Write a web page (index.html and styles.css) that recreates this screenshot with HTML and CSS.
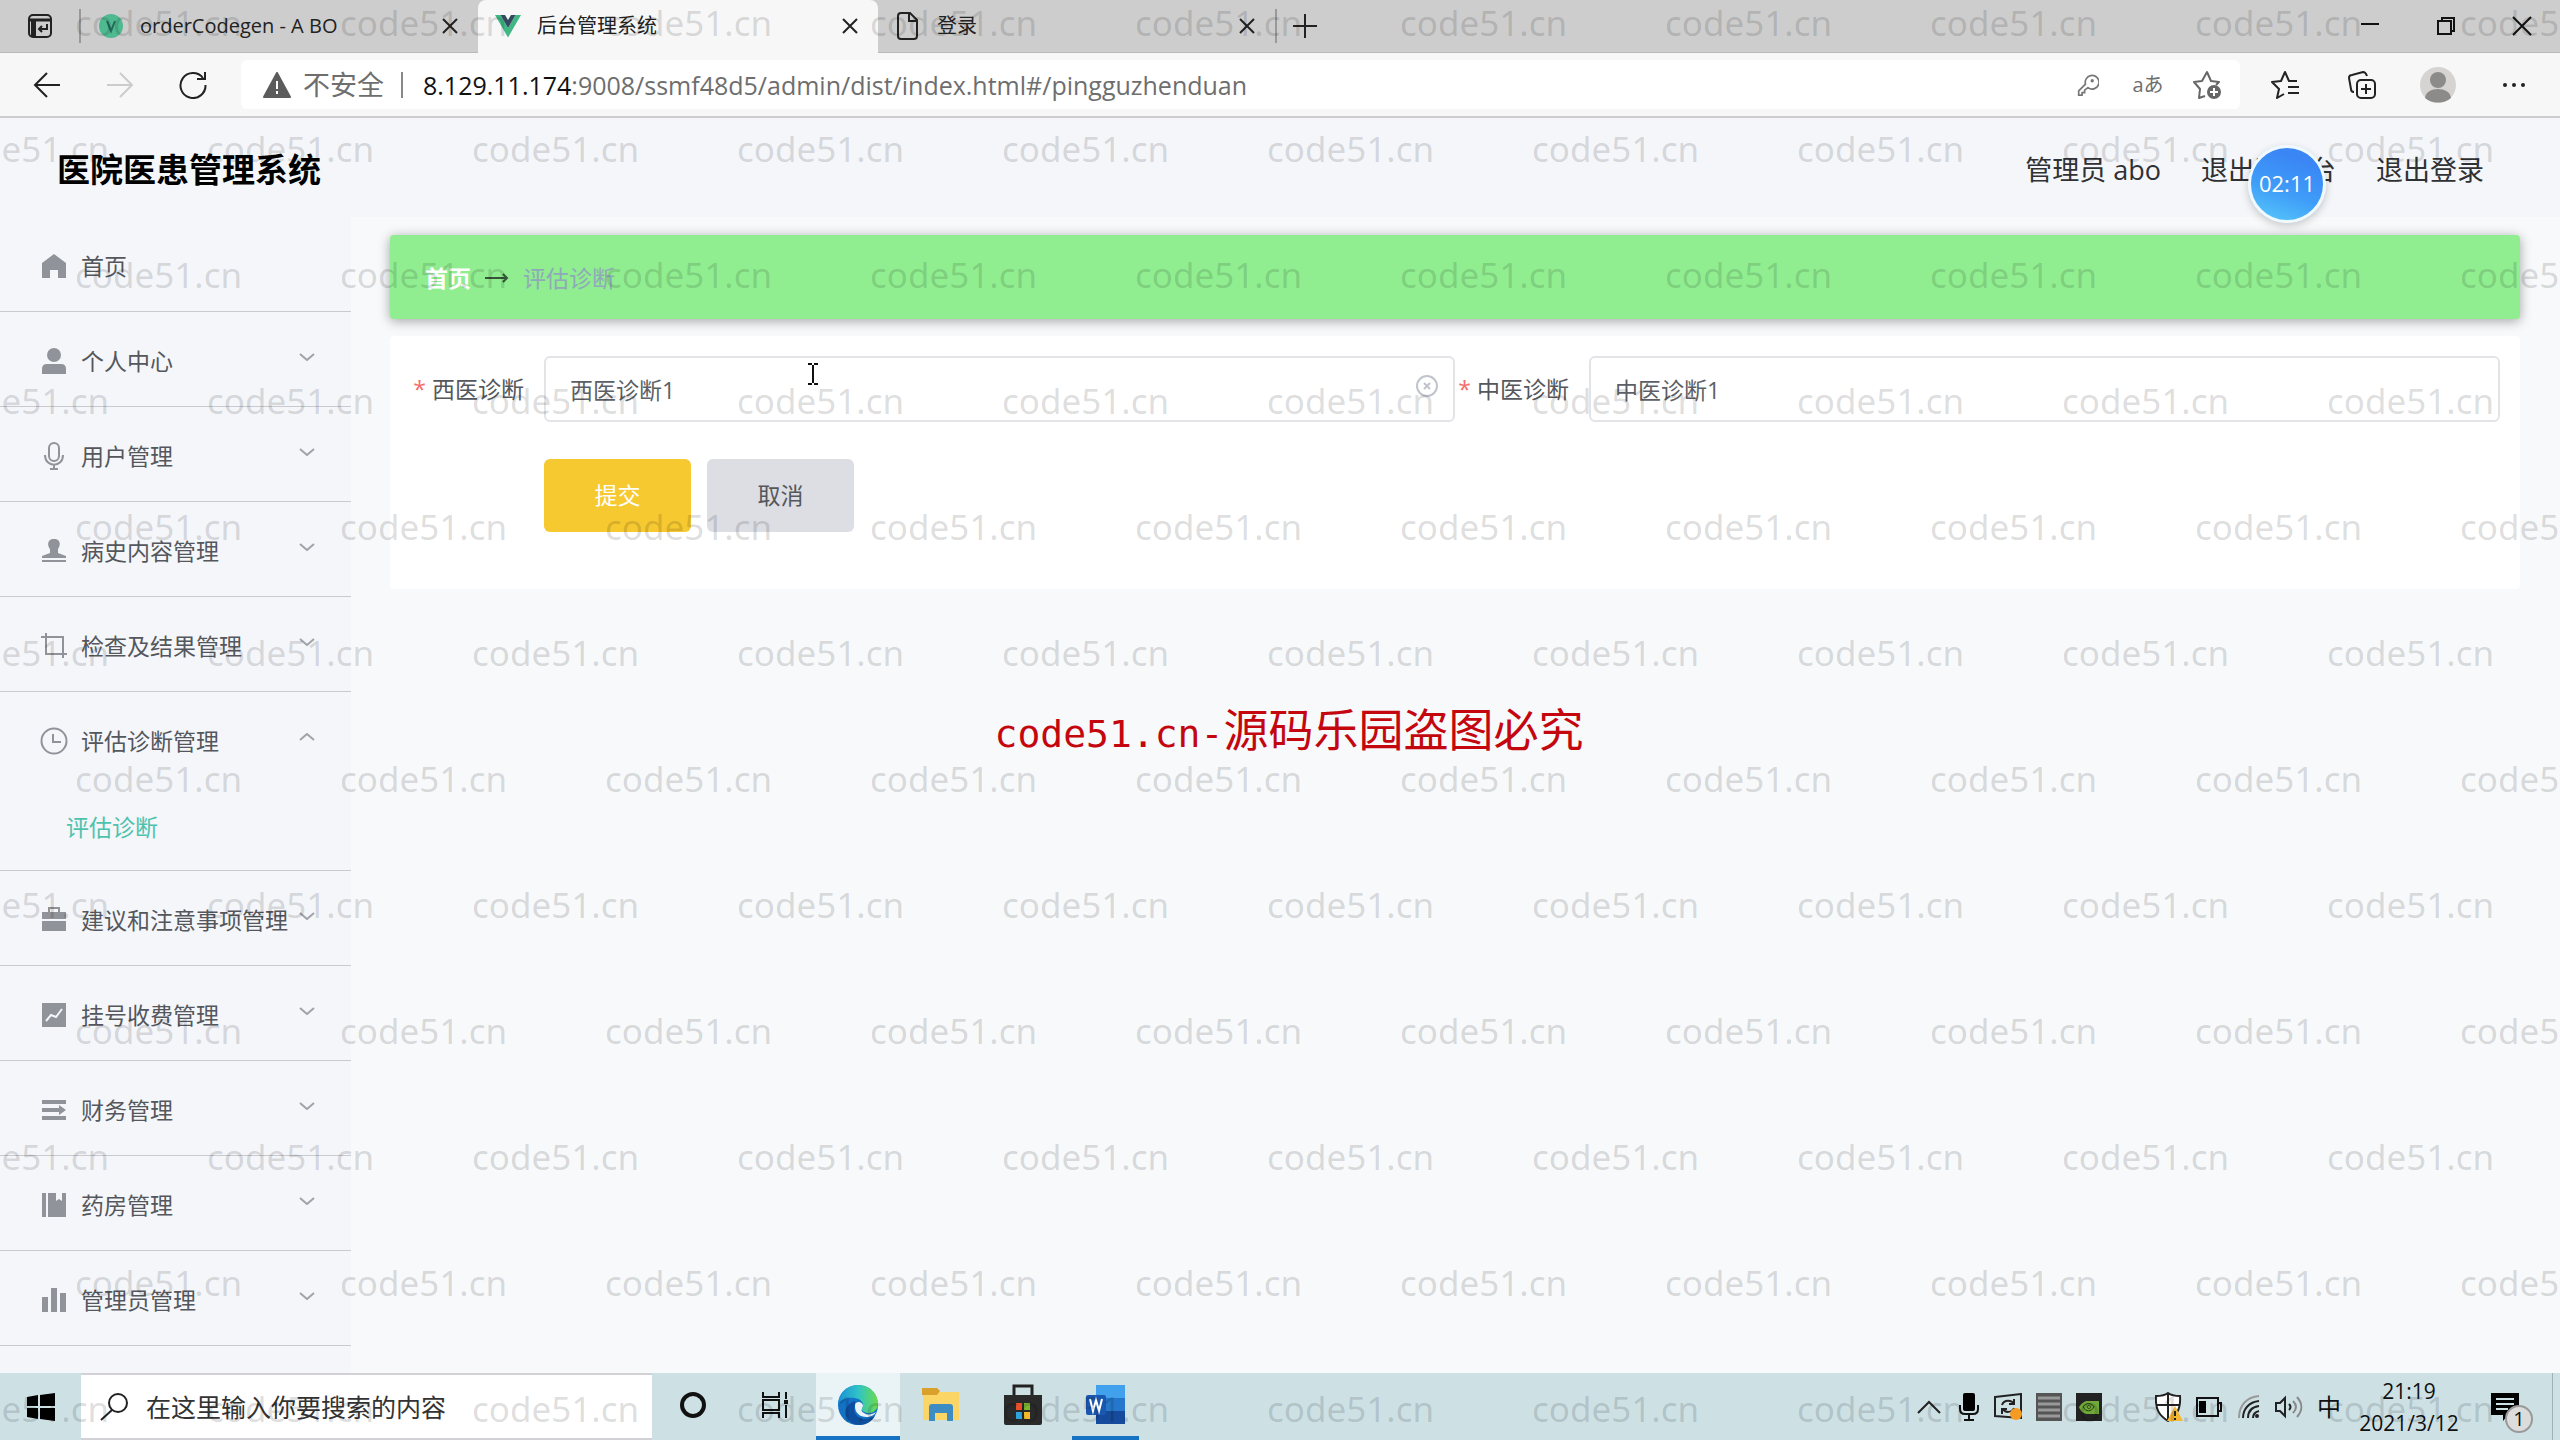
FILE: index.html
```html
<!DOCTYPE html>
<html lang="zh-CN">
<head>
<meta charset="utf-8">
<title>后台管理系统</title>
<link rel="stylesheet" href="styles.css">
</head>
<body>
<div class="tabstrip">
  <button class="tab-menu" aria-label="标签页操作"><svg width="26" height="26" viewBox="0 0 26 26" fill="none" stroke="#222" stroke-width="2"><rect x="2" y="2" width="22" height="22" rx="4"/><path d="M2 7h22" stroke-width="3"/><path d="M4 6v18h5V6z" fill="#222" stroke="none"/><path d="M20 11v5h-8m3-3-3 3 3 3"/></svg></button>
  <span class="divider"></span>
  <div class="tab tab-first">
    <svg width="26" height="26" viewBox="0 0 26 26"><circle cx="13" cy="13" r="12" fill="#4fb990"/><path d="M9 8l4 10 4-10" fill="none" stroke="#1f6a58" stroke-width="2"/></svg>
    <span class="tab-title">orderCodegen - A BO</span>
    <button class="tab-close" aria-label="关闭"><svg width="16" height="16" viewBox="0 0 16 16" stroke="#222" stroke-width="2"><path d="M1 1l14 14M15 1L1 15"/></svg></button>
  </div>
  <div class="tab tab-active">
    <svg width="26" height="24" viewBox="0 0 26 24"><path d="M0 1h5.500L13 14l7.500-13H26L13 23.500z" fill="#41b883"/><path d="M5.500 1h4.500l3 5 3-5h4.500L13 14z" fill="#34495e"/></svg>
    <span class="tab-title">后台管理系统</span>
    <button class="tab-close" aria-label="关闭"><svg width="16" height="16" viewBox="0 0 16 16" stroke="#222" stroke-width="2"><path d="M1 1l14 14M15 1L1 15"/></svg></button>
  </div>
  <div class="tab tab-last">
    <svg width="26" height="28" viewBox="0 0 26 28" fill="none" stroke="#222" stroke-width="2"><path d="M6 1h9l7 7v16a3 3 0 0 1-3 3H6a3 3 0 0 1-3-3V4a3 3 0 0 1 3-3z"/><path d="M14 1v8h8"/></svg>
    <span class="tab-title">登录</span>
    <button class="tab-close" aria-label="关闭"><svg width="16" height="16" viewBox="0 0 16 16" stroke="#222" stroke-width="2"><path d="M1 1l14 14M15 1L1 15"/></svg></button>
  </div>
  <span class="divider"></span>
  <button class="new-tab" aria-label="新建标签页"><svg width="24" height="24" viewBox="0 0 24 24" stroke="#222" stroke-width="2"><path d="M12 0v24M0 12h24"/></svg></button>
  <div class="window-controls">
    <button aria-label="最小化"><svg width="20" height="20" viewBox="0 0 20 20" stroke="#111" stroke-width="2"><path d="M1 8h18"/></svg></button>
    <button aria-label="还原"><svg width="20" height="20" viewBox="0 0 20 20" fill="none" stroke="#111" stroke-width="2"><path d="M2 5h13v13H2zM6 5V2h12v13h-3"/></svg></button>
    <button aria-label="关闭窗口"><svg width="20" height="20" viewBox="0 0 20 20" stroke="#111" stroke-width="2"><path d="M1 1l18 18M19 1L1 19"/></svg></button>
  </div>
</div>

<div class="toolbar">
  <div class="nav-buttons">
    <button aria-label="后退"><svg width="28" height="28" viewBox="0 0 28 28" fill="none" stroke="#222" stroke-width="2"><path d="M27 14H2M14 2L2 14l12 12"/></svg></button>
    <button aria-label="前进"><svg width="28" height="28" viewBox="0 0 28 28" fill="none" stroke="#ccc" stroke-width="2"><path d="M1 14h25M14 2l12 12-12 12"/></svg></button>
    <button aria-label="刷新"><svg width="28" height="28" viewBox="0 0 28 28" fill="none" stroke="#222" stroke-width="2"><path d="M24 7a12.500 12.500 0 1 0 2.500 7M26 1v7h-8"/></svg></button>
  </div>
  <div class="address">
    <svg width="28" height="26" viewBox="0 0 28 26"><path d="M14 1L27 25H1z" fill="#5c5c5c" stroke="#5c5c5c" stroke-width="2" stroke-linejoin="round"/><path d="M14 9v8M14 19v3" stroke="#fff" stroke-width="2"/></svg>
    <span class="insecure">不安全</span>
    <span class="address-divider"></span>
    <span class="url"><b>8.129.11.174</b>:9008/ssmf48d5/admin/dist/index.html#/pingguzhenduan</span>
    <div class="address-tools">
      <button aria-label="密码"><svg width="22" height="24" viewBox="0 0 26 26" fill="none" stroke="#777" stroke-width="2"><path d="M16 2a8 8 0 1 1-3 14l-4 3v3H6v3H2v-5l8-8a8 8 0 0 1 6-10z"/><circle cx="18" cy="8" r="1"/></svg></button>
      <button class="translate">aあ</button>
      <button aria-label="添加到收藏夹"><svg width="30" height="30" viewBox="0 0 30 30" fill="none" stroke="#666" stroke-width="2"><path d="M12 26l-6 2 1-9-6-7 8-1 5-9 4 9 8 1-3 3" stroke-linejoin="round"/><circle cx="21" cy="22" r="7" fill="#666" stroke="none"/><path d="M21 18v8M17 22h8" stroke="#fff"/></svg></button>
    </div>
  </div>
  <div class="browser-tools">
    <button aria-label="收藏夹"><svg width="30" height="30" viewBox="0 0 30 30" fill="none" stroke="#222" stroke-width="2"><path d="M13 24l-7 4 2-9-7-7 9-1 4-9 4 9h8M17 17h11M17 23h11" stroke-linejoin="round"/></svg></button>
    <button aria-label="集锦"><svg width="30" height="30" viewBox="0 0 30 30" fill="none" stroke="#222" stroke-width="2"><rect x="10" y="10" width="18" height="18" rx="4"/><path d="M19 14v10M14 19h10M7 22c-2 0-3-1-3-3L2 8c0-2 1-3 3-3l11-3c2 0 3 1 4 4"/></svg></button>
    <button aria-label="个人资料"><svg width="38" height="38" viewBox="0 0 38 38"><circle cx="19" cy="19" r="18" fill="#d6d4d2"/><circle cx="19" cy="14" r="8" fill="#8d8b89"/><path d="M6 32c1-12 25-12 26 0-7 6-19 6-26 0z" fill="#8d8b89"/></svg></button>
    <button aria-label="设置及其他"><svg width="24" height="6" viewBox="0 0 24 6" fill="#222"><circle cx="3" cy="3" r="2"/><circle cx="12" cy="3" r="2"/><circle cx="21" cy="3" r="2"/></svg></button>
  </div>
</div>

<div class="page">
  <header class="site-header">
    <h1>医院医患管理系统</h1>
    <div class="user-links">
      <span>管理员 abo</span>
      <a href="#front">退出到前台</a>
      <a href="#logout">退出登录</a>
    </div>
    <div class="timer">02:11</div>
  </header>
  <div class="body">
    <nav class="sidebar">
      <ul>
        <li><a href="#home"><svg class="ico" viewBox="0 0 24 24"><path d="M12 0l12 9v15h-8v-8H8v8H0V9z"/></svg>首页</a></li>
        <li><a href="#me"><svg class="ico" viewBox="0 0 24 24"><circle cx="12" cy="6" r="7"/><path d="M0 25v-5q0-5 5-5h14q5 0 5 5v5z"/></svg>个人中心<svg class="chev" viewBox="0 0 16 8"><path d="M1 1l7 6 7-6"/></svg></a></li>
        <li><a href="#users"><svg class="ico line" viewBox="0 0 24 24"><rect x="7" y="-1" width="10" height="18" rx="5"/><path d="M3 11c0 13 18 13 18 0M12 21v4M8 25h8"/></svg>用户管理<svg class="chev" viewBox="0 0 16 8"><path d="M1 1l7 6 7-6"/></svg></a></li>
        <li><a href="#history"><svg class="ico" viewBox="0 0 24 24"><path d="M12 0c8 0 6 8 4 10v4l8 3v2H0v-2l8-3v-4C6 8 4 0 12 0zM0 21h24v2H0z"/></svg>病史内容管理<svg class="chev" viewBox="0 0 16 8"><path d="M1 1l7 6 7-6"/></svg></a></li>
        <li><a href="#exam"><svg class="ico line" viewBox="0 0 24 24"><path d="M4-1v21h21M-1 3h22v21"/></svg>检查及结果管理<svg class="chev" viewBox="0 0 16 8"><path d="M1 1l7 6 7-6"/></svg></a></li>
        <li class="open"><a href="#assess"><svg class="ico line" viewBox="0 0 24 24"><circle cx="12" cy="12" r="12.500"/><path d="M11 5v8h8"/></svg>评估诊断管理<svg class="chev" viewBox="0 0 16 8"><path d="M1 7l7-6 7 6"/></svg></a>
          <a class="sub" href="#pingguzhenduan">评估诊断</a></li>
        <li><a href="#advice"><svg class="ico" viewBox="0 0 24 24"><path d="M0 4h6v-5h12v5h6v7H0zM8 4h8V1H8zM0 13h24v10H0z" fill-rule="evenodd"/></svg>建议和注意事项管理<svg class="chev" viewBox="0 0 16 8"><path d="M1 1l7 6 7-6"/></svg></a></li>
        <li><a href="#fees"><svg class="ico" viewBox="0 0 24 24"><path d="M0 0h24v24H0z"/><path d="M4 18l5-6 5 2 6-8" fill="none" stroke="#f4f6fa" stroke-width="2"/></svg>挂号收费管理<svg class="chev" viewBox="0 0 16 8"><path d="M1 1l7 6 7-6"/></svg></a></li>
        <li><a href="#finance"><svg class="ico" viewBox="0 0 24 24"><path d="M0 2h24v4H0zM0 10h17V7l7 5-7 5v-3H0zM0 18h24v4H0z"/></svg>财务管理<svg class="chev" viewBox="0 0 16 8"><path d="M1 1l7 6 7-6"/></svg></a></li>
        <li><a href="#pharmacy"><svg class="ico" viewBox="0 0 24 24"><path d="M0 0h4v24H0zM6 0h8v8l3-2 3 2V0h4v24H6z"/></svg>药房管理<svg class="chev" viewBox="0 0 16 8"><path d="M1 1l7 6 7-6"/></svg></a></li>
        <li><a href="#admins"><svg class="ico" viewBox="0 0 24 24"><path d="M0 9h6v15H0zM9 0h6v24H9zM18 5h6v19h-6z"/></svg>管理员管理<svg class="chev" viewBox="0 0 16 8"><path d="M1 1l7 6 7-6"/></svg></a></li>
      </ul>
    </nav>
    <main>
      <div class="breadcrumb">
        <a href="#home">首页</a>
        <svg width="24" height="12" viewBox="0 0 24 12" fill="none" stroke="#35563a" stroke-width="2"><path d="M0 6h22M18 2l4 4-4 4"/></svg>
        <span>评估诊断</span>
      </div>
      <form class="card">
        <div class="field">
          <label for="western"><i>*</i>西医诊断</label>
          <div class="control">
            <input id="western" type="text" value="西医诊断1">
            <button type="button" class="clear" aria-label="清空"><svg width="22" height="22" viewBox="0 0 22 22" fill="none" stroke="#c0c4cc" stroke-width="2"><circle cx="11" cy="11" r="10"/><path d="M8 8l6 6M14 8l-6 6"/></svg></button>
          </div>
        </div>
        <div class="field">
          <label for="chinese"><i>*</i>中医诊断</label>
          <div class="control"><input id="chinese" type="text" value="中医诊断1"></div>
        </div>
        <div class="actions">
          <button type="button" class="submit">提交</button>
          <button type="button" class="cancel">取消</button>
        </div>
      </form>
    </main>
  </div>
</div>

<div class="taskbar">
  <button class="start" aria-label="开始"><svg width="28" height="28" viewBox="0 0 28 28"><path d="M0 4l11-2v11H0zM13 2l15-2v13H13zM0 15h11v11L0 24zM13 15h15v13l-15-2z"/></svg></button>
  <label class="search">
    <svg width="28" height="28" viewBox="0 0 28 28" fill="none" stroke="#222" stroke-width="2"><circle cx="18" cy="10" r="9"/><path d="M12 17L1 27"/></svg>
    <input type="text" placeholder="在这里输入你要搜索的内容" aria-label="搜索">
  </label>
  <button class="app" aria-label="Cortana"><svg width="28" height="28" viewBox="0 0 28 28" fill="none" stroke="#111" stroke-width="4"><circle cx="14" cy="14" r="11"/></svg></button>
  <button class="app" aria-label="任务视图"><svg width="28" height="28" viewBox="0 0 28 28" fill="none" stroke="#111" stroke-width="2"><path d="M2 1v5h16V1M2 27v-5h16v5M2 9h16v10H2zM25 1v7M25 14v13"/><path d="M23 9h4v4h-4z" fill="#111" stroke="none"/></svg></button>
  <button class="app running current" aria-label="Edge"><svg width="42" height="42" viewBox="0 0 42 42"><defs><linearGradient id="eg" x1="0" x2="1"><stop offset="0" stop-color="#1b8fd8"/><stop offset=".5" stop-color="#2fc3c8"/><stop offset="1" stop-color="#6bdb4c"/></linearGradient></defs><circle cx="21" cy="21" r="20" fill="#1372c4"/><path d="M1 20C3-5 39-5 41 19c0 9-8 12-14 9-4-2-1-4-1-7 0-9-20-10-25-1z" fill="url(#eg)"/><path d="M18 21c-4 11 8 18 20 11-7 12-24 12-29 0-2-7 2-13 9-15z" fill="#0d4f9e"/><path d="M18 21c1-5 8-3 8 1-1 3-3 5 1 7 4 3 9 1 12-1-4 8-22 7-21-7z" fill="#eaf4f6"/></svg></button>
  <button class="app" aria-label="文件资源管理器"><svg width="40" height="36" viewBox="0 0 40 36"><path d="M2 5h36v28H2z" fill="#fbd667"/><path d="M1 1h15l3 3-3 4H1z" fill="#d9a02c"/><path d="M8 34V20q0-3 3-3h18q3 0 3 3v14h-6v-8H14v8z" fill="#3d8cc4"/></svg></button>
  <button class="app" aria-label="Microsoft Store"><svg width="40" height="42" viewBox="0 0 40 42"><path d="M11 12V2h18v10" fill="none" stroke="#222" stroke-width="3"/><path d="M1 11h38v28q0 2-2 2H3q-2 0-2-2z" fill="#2a2a2a"/><path d="M13 19h6v7h-6z" fill="#e8502a"/><path d="M21 19h6v7h-6z" fill="#7cb82f"/><path d="M13 28h6v7h-6z" fill="#2fa3df"/><path d="M21 28h6v7h-6z" fill="#f4b92a"/></svg></button>
  <button class="app running" aria-label="Word"><svg width="40" height="42" viewBox="0 0 40 42"><path d="M10 1h29v14H10z" fill="#42a1ec"/><path d="M10 14h29v14H10z" fill="#2477cc"/><path d="M10 27h29v13H10z" fill="#154a9c"/><rect x="0" y="11" width="20" height="20" rx="2" fill="#1a57ae"/><path d="M4 15l3 12 3-11 3 11 3-12" fill="none" stroke="#fff" stroke-width="2"/></svg></button>
  <div class="tray">
    <button aria-label="显示隐藏的图标"><svg width="24" height="14" viewBox="0 0 24 14" fill="none" stroke="#222" stroke-width="2"><path d="M1 13L12 2l11 11"/></svg></button>
    <button aria-label="麦克风"><svg width="20" height="28" viewBox="0 0 20 28"><rect x="4" y="0" width="12" height="18" rx="2"/><path d="M1 12v4q0 5 5 5h8q5 0 5-5v-4M10 21v6M5 27h10" fill="none" stroke="#111" stroke-width="2"/></svg></button>
    <button aria-label="同步"><svg width="30" height="28" viewBox="0 0 30 28" fill="none" stroke="#222" stroke-width="2"><path d="M1 4l26-3v24L1 23z"/><path d="M8 12c2-6 10-5 12-1M20 6v5h-5M20 15c-2 5-9 5-11 1M8 21v-5h5"/><circle cx="22" cy="21" r="6" fill="#f59a23" stroke="none"/></svg></button>
    <button aria-label="内存"><svg width="26" height="28" viewBox="0 0 26 28"><path d="M0 0h26v28H0z" fill="#555"/><path d="M2 5h22M2 11h22M2 17h22M2 23h22" stroke="#999" stroke-width="3"/></svg></button>
    <button aria-label="NVIDIA"><svg width="26" height="28" viewBox="0 0 26 28"><path d="M0 0h26v28H0z" fill="#222"/><path d="M3 14c4-6 8-6 8-6h12v13H11c-4 0-7-4-8-7z" fill="#71a83a"/><path d="M7 14c3-5 9-4 11 0-3 5-8 5-11 0zM11 14c1-2 3-2 4 0-1 2-3 2-4 0z" fill="none" stroke="#234012" stroke-width="1"/></svg></button>
    <span class="tray-gap"></span>
    <button aria-label="安全中心"><svg width="28" height="30" viewBox="0 0 28 30"><path d="M13 1c4 3 8 3 12 3 1 14-4 20-12 25C5 24 0 18 1 4c4 0 8 0 12-3z" fill="#fff" stroke="#222" stroke-width="2"/><path d="M13 1v28M1 13h24" stroke="#222" stroke-width="2"/><path d="M20 14l8 15H12z" fill="#f5b834"/><path d="M20 19v5M20 26v2" stroke="#222" stroke-width="2"/></svg></button>
    <button aria-label="电池"><svg width="26" height="20" viewBox="0 0 26 20"><path d="M1 1h21v18H1zM22 6h3v8h-3" fill="none" stroke="#111" stroke-width="2"/><path d="M3 4h7v12H3z"/></svg></button>
    <button aria-label="网络"><svg width="24" height="26" viewBox="0 0 24 26" fill="none" stroke="#222" stroke-width="2"><path d="M2 24C2 11 10 3 22 2" stroke="#999"/><path d="M6 24C6 15 12 8 22 7M11 24c0-7 4-11 11-12M16 24c0-4 2-6 6-7"/><circle cx="20" cy="22" r="2" fill="#222" stroke="none"/></svg></button>
    <button aria-label="音量"><svg width="28" height="24" viewBox="0 0 28 24" fill="none" stroke="#222" stroke-width="2"><path d="M1 8h4l5-5v18l-5-5H1zM14 9c2 2 2 4 0 6"/><path d="M18 6c4 4 4 8 0 12M22 2c6 7 6 13 0 20" stroke="#888"/></svg></button>
    <button class="ime">中</button>
    <div class="clock"><span>21:19</span><span>2021/3/12</span></div>
    <button class="notice" aria-label="通知"><svg width="28" height="28" viewBox="0 0 28 28"><path d="M0 0h28v22H17l-5 6v-6H0z"/><path d="M5 6h18M5 11h18M5 16h12" stroke="#cde1e5" stroke-width="2"/></svg><span class="badge">1</span></button>
    <span class="show-desktop"></span>
  </div>
</div>

<svg class="cursor" width="10" height="22" viewBox="0 0 10 22" fill="none" stroke="#111" stroke-width="2"><path d="M0 1h4M6 1h4M5 2v18M0 21h4M6 21h4"/></svg>
<div class="watermarks" aria-hidden="true"></div>
<p class="notice-mark"><span>code51.cn-</span>源码乐园盗图必究</p>
<script src="script.js"></script>
</body>
</html>
```
FILE: script.js
```js
// Tile the watermark over the window; every other row starts half a step to the left.
const layer = document.querySelector('.watermarks');
const rows = Math.ceil(window.innerHeight / 126);
const columns = Math.ceil(window.innerWidth / 265);
for (let r = 0; r < rows; r++) {
  const row = document.createElement('div');
  row.className = 'watermark-row';
  for (let c = 0; c < columns; c++) {
    const mark = document.createElement('span');
    mark.textContent = 'code51.cn';
    row.append(mark);
  }
  layer.append(row);
}
```
FILE: styles.css
```css
* { box-sizing: border-box; }
body {
  margin: 0;
  min-height: 100vh;
  display: flex;
  flex-direction: column;
  position: relative;
  overflow: hidden;
  background: #f7f9fb;
  color: #54575c;
  font: 23px/32px "Open Sans", "Noto Sans CJK SC", sans-serif;
}
button { border: 0; padding: 0; background: none; font: inherit; color: inherit; display: flex; align-items: center; justify-content: center; }
a { color: inherit; text-decoration: none; }
svg { display: block; flex: none; }

/* Tabs */
.tabstrip { display: flex; align-items: center; height: 53px; background: #cdcdcd; border-bottom: 1px solid #bababa; font-size: 20px; color: #222; }
.tab-menu { width: 79px; }
.divider { width: 2px; height: 34px; background: #999; }
.tab { display: flex; align-items: center; gap: 16px; height: 53px; width: 397px; padding: 0 20px 0 17px; }
.tab-active { width: 400px; background: #f7f7f7; border-radius: 8px 8px 0 0; }
.tab-title { flex: 1; white-space: nowrap; }
.new-tab { width: 56px; }
.window-controls { display: flex; margin-left: auto; }
.window-controls button { width: 76px; height: 52px; }

/* Toolbar */
.toolbar { display: flex; align-items: center; height: 65px; padding: 0 8px 0 10px; background: #f7f7f7; border-bottom: 2px solid #cdcdcf; }
.nav-buttons { display: flex; width: 231px; }
.nav-buttons button { width: 73px; }
.address { flex: 1; display: flex; align-items: center; height: 49px; padding: 0 2px 0 22px; background: #fff; border-radius: 6px; font-size: 25px; color: #6e6e6e; }
.insecure { margin-left: 12px; font-size: 27px; }
.address-divider { width: 2px; height: 26px; margin: 0 20px 0 17px; background: #888; }
.url b { font-weight: 400; color: #111; }
.address-tools { display: flex; margin-left: auto; }
.address-tools button { width: 60px; }
.address-tools .translate { font-size: 20px; }
.browser-tools { display: flex; margin-left: 8px; }
.browser-tools button { width: 76px; }

/* Site header */
.page { flex: 1; display: flex; flex-direction: column; }
.site-header { position: relative; display: flex; align-items: center; justify-content: space-between; height: 99px; padding: 5px 76px 0 57px; background: #f4f6fa; }
h1 { margin: 0; font-size: 33px; line-height: 40px; color: #000; }
.user-links { display: flex; gap: 40px; font-size: 27px; color: #303133; }
.timer { position: absolute; right: 234px; top: 27px; width: 78px; height: 78px; border: 3px solid #eefaff; border-radius: 50%; background: linear-gradient(200deg, #3a86f5 20%, #3f9df8 60%, #58cbfb); box-shadow: 0 3px 8px rgba(0, 0, 0, .2); color: #fff; font-size: 22px; line-height: 70px; text-align: center; }

/* Sidebar */
.body { flex: 1; display: flex; }
.sidebar { width: 351px; background: #f4f6fa; }
.sidebar ul { margin: 0; padding: 0; list-style: none; }
.sidebar li { border-bottom: 1px solid #c8cacf; }
.sidebar li a { display: flex; align-items: center; height: 94px; padding: 4px 36px 0 42px; white-space: nowrap; }
.sidebar li .sub { height: 84px; padding: 25px 0 0 66px; color: #4fc2ad; align-items: flex-start; }
.ico { width: 24px; height: 24px; margin-right: 15px; overflow: visible; fill: #909399; }
.ico.line { fill: none; stroke: #909399; stroke-width: 2; }
.chev { width: 16px; height: 8px; margin-left: auto; margin-bottom: 8px; fill: none; stroke: #a0a3a8; stroke-width: 2; }

/* Content */
main { flex: 1; padding: 18px 40px 0 39px; }
.breadcrumb { display: flex; align-items: center; gap: 14px; height: 84px; padding: 2px 35px 0; background: #90ee90; border-radius: 4px; box-shadow: 0 2px 12px rgba(0, 0, 0, .35); color: #8fa9b8; }
.breadcrumb a { color: #fff; font-weight: 700; }
.card { display: grid; grid-template-columns: 1fr 1fr; row-gap: 37px; margin-top: 17px; padding: 20px 20px 57px; background: #fff; border-radius: 4px; }
.field { display: flex; align-items: center; }
.field label { width: 134px; padding-right: 20px; text-align: right; white-space: nowrap; }
.field i { margin-right: 6px; color: #f56c6c; font-style: normal; }
.control { flex: 1; position: relative; }
.control input { display: block; width: 100%; height: 66px; padding: 0 24px; border: 2px solid #e2e4e8; border-radius: 6px; background: none; font: inherit; color: #5c5f65; outline: none; }
.clear { position: absolute; right: 17px; top: 19px; }
.actions { grid-column: 1 / -1; display: flex; gap: 16px; padding-left: 134px; }
.actions button { width: 147px; height: 73px; padding-bottom: 2px; border-radius: 6px; }
.submit { background: #f7c931; color: #fff; }
.cancel { background: #dcdee4; }

/* Taskbar */
.taskbar { display: flex; height: 67px; background: #cde1e5; color: #111; }
.start { width: 81px; }
.search { display: flex; align-items: center; gap: 18px; width: 571px; padding-left: 19px; background: #fff; border: 2px solid #d2d2d6; border-width: 2px 0; }
.search input { flex: 1; min-width: 0; border: 0; padding: 0; font: inherit; font-size: 25px; background: none; outline: none; }
.search input::placeholder { color: #333; opacity: 1; }
.app { width: 82px; border-bottom: 4px solid transparent; }
.running { width: 67px; margin: 0 8px; border-color: #1673c4; }
.current { width: 84px; margin: 0; background: #eaf4f6; }
.tray { display: flex; margin-left: auto; }
.tray button, .tray-gap { width: 40px; }
.tray .ime { font-size: 24px; }
.clock { display: flex; flex-direction: column; justify-content: center; width: 120px; font-size: 21px; text-align: center; }
.tray .notice { position: relative; width: 72px; }
.badge { position: absolute; left: 36px; top: 32px; width: 28px; height: 28px; border: 2px solid #999; border-radius: 50%; background: #dcdcdc; font-size: 20px; line-height: 24px; text-align: center; }
.show-desktop { width: 8px; margin-left: 11px; border-left: 1px solid #9fb3b8; }

/* Overlays */
.cursor { position: absolute; left: 808px; top: 363px; }
.watermarks { position: absolute; inset: 0; overflow: hidden; pointer-events: none; }
.watermark-row { display: flex; height: 126px; padding-left: 75px; font: 35px/46px "Noto Sans", sans-serif; color: rgba(0, 0, 0, .14); }
.watermark-row:nth-child(even) { padding-left: 0; margin-left: -58px; }
.watermark-row span { flex: none; width: 265px; }
.notice-mark { position: absolute; left: 0; right: 0; top: 700px; margin: 0; padding-left: 18px; display: flex; justify-content: center; align-items: baseline; font-size: 45px; line-height: 60px; color: #c4070f; pointer-events: none; }
.notice-mark span { font-family: "DejaVu Sans Mono", monospace; font-size: 38px; }
```
